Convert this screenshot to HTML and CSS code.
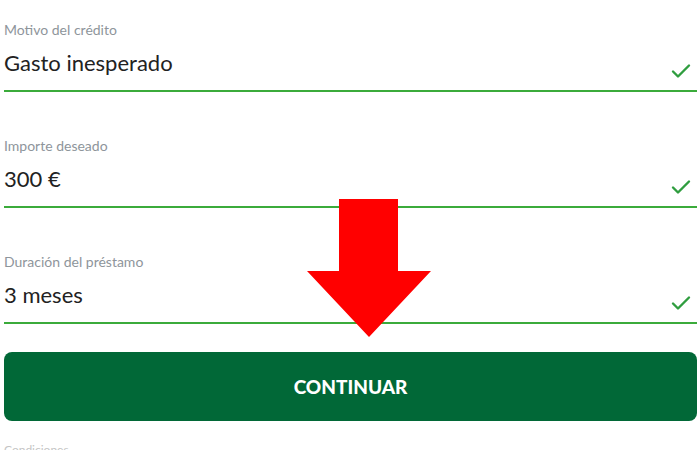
FILE: index.html
```html
<!DOCTYPE html>
<html lang="es">
<head>
<meta charset="utf-8">
<link rel="stylesheet" href="styles.css">
</head>
<body>
<div class="page">
  <div class="fields">
    <div class="field">
      <div class="label">Motivo del crédito</div>
      <div class="row"><span class="value">Gasto inesperado</span>
        <svg class="check" viewBox="0 0 20 16"><path d="M2 8.5l5 5L18 2.5" fill="none" stroke="#2f9d3f" stroke-width="2.4" stroke-linecap="round" stroke-linejoin="round"/></svg></div>
    </div>
    <div class="field">
      <div class="label">Importe deseado</div>
      <div class="row"><span class="value">300 €</span>
        <svg class="check" viewBox="0 0 20 16"><path d="M2 8.5l5 5L18 2.5" fill="none" stroke="#2f9d3f" stroke-width="2.4" stroke-linecap="round" stroke-linejoin="round"/></svg></div>
    </div>
    <div class="field">
      <div class="label">Duración del préstamo</div>
      <div class="row"><span class="value">3 meses</span>
        <svg class="check" viewBox="0 0 20 16"><path d="M2 8.5l5 5L18 2.5" fill="none" stroke="#2f9d3f" stroke-width="2.4" stroke-linecap="round" stroke-linejoin="round"/></svg></div>
    </div>
  </div>
  <button class="btn">CONTINUAR</button>
  <div class="foot">Condiciones</div>
  <svg class="arrow" viewBox="0 0 124 138"><polygon points="32,0 91,0 91,72 124,72 62,138 0,72 32,72" fill="#ff0000"/></svg>
</div>
</body>
</html>
```
FILE: styles.css
```css
html, body { margin: 0; padding: 0; background: #fff; }
body { font-family: "Lato", "Open Sans", sans-serif; width: 700px; height: 450px; overflow: hidden; }
.page { position: relative; padding: 20px 3px 0 4px; }
.fields { display: flex; flex-direction: column; gap: 44px; }
.field { display: flex; flex-direction: column; }
.label { font-size: 14px; color: #8e959b; line-height: 20px; height: 20px; }
.row { display: flex; align-items: center; justify-content: space-between; height: 50px; border-bottom: 2px solid #3bab3b; }
.value { font-size: 22px; color: #222; margin-top: -6px; }
.check { width: 20px; height: 16px; margin-right: 6px; margin-top: 12px; }
.btn { display: block; width: 693px; height: 69px; margin-top: 28px; background: #016837; color: #fff; border: none; border-radius: 8px; font-family: "Lato", sans-serif; font-weight: 900; font-size: 19px; }
.foot { margin-top: 22px; font-size: 12px; line-height: 14px; color: #c4c4c4; }
.arrow { position: absolute; left: 307px; top: 199px; width: 124px; height: 138px; }
```
